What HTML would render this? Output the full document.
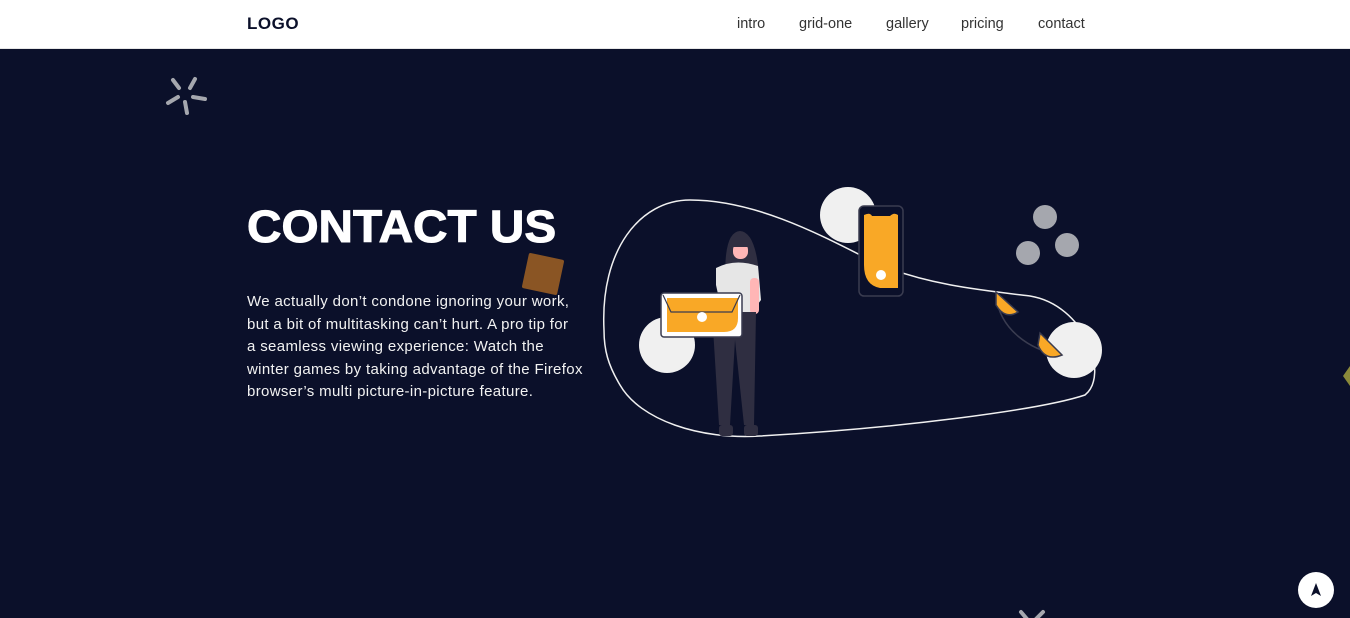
<!DOCTYPE html>
<html><head><meta charset="utf-8"><style>
*{margin:0;padding:0;box-sizing:border-box}
body{width:1350px;height:618px;overflow:hidden;background:#0b102a;font-family:"Liberation Sans",sans-serif;position:relative}
.hdr{position:absolute;left:0;top:0;width:1350px;height:49px;background:#fff;border-bottom:1px solid #e6e6e6}
.logo{position:absolute;left:247px;top:14px;font-weight:bold;font-size:17px;color:#0b102a;letter-spacing:0.5px}
.nav{position:absolute;top:16px;font-size:14.5px;color:#333}
h1{position:absolute;left:247px;top:201px;font-size:45px;font-weight:900;color:#fff;letter-spacing:0px;white-space:nowrap;transform:scaleX(1.06);transform-origin:left;-webkit-text-stroke:1px #fff}
p{position:absolute;left:247px;top:291px;font-size:15px;line-height:22.5px;color:#f2f2f2;white-space:nowrap;letter-spacing:0.35px}
.up{position:absolute;left:1298px;top:572px;width:36px;height:36px;border-radius:50%;background:#fff}
</style></head><body>
<div class="hdr">
<div class="logo">LOGO</div>
<div class="nav" style="left:737px">intro</div>
<div class="nav" style="left:799px">grid-one</div>
<div class="nav" style="left:886px">gallery</div>
<div class="nav" style="left:961px">pricing</div>
<div class="nav" style="left:1038px">contact</div>
</div>
<svg style="position:absolute;left:0;top:0" width="1350" height="618">
<g stroke="#a5a7ae" stroke-width="4" stroke-linecap="round" fill="none">
<line x1="173" y1="80" x2="179" y2="88"/><line x1="195" y1="79" x2="190" y2="88"/>
<line x1="193" y1="97" x2="205" y2="99"/><line x1="168" y1="103" x2="178" y2="97"/>
<line x1="185" y1="102" x2="187" y2="113"/>
<line x1="1021" y1="612" x2="1027" y2="619"/><line x1="1043" y1="612" x2="1036" y2="619"/>
</g>
<rect x="525" y="256" width="36" height="36" rx="2" fill="#8a5524" transform="rotate(12 543 274)"/>
<polygon points="1350,366 1343,376 1350,386" fill="#8b8a3a"/>
<path d="M604,330 C600,250 640,200 690,200 C760,200 830,240 880,265 C930,285 980,290 1030,296 C1085,305 1110,375 1085,395 C1040,410 900,428 760,436 C700,440 640,420 620,385 C608,365 604,350 604,330Z" fill="none" stroke="#f0f0f0" stroke-width="1.5"/>
<circle cx="848" cy="215" r="28" fill="#f0f0f0"/>
<circle cx="667" cy="345" r="28" fill="#f0f0f0"/>
<circle cx="1074" cy="350" r="28" fill="#f0f0f0"/>
<circle cx="1045" cy="217" r="12" fill="#a5a7ae"/>
<circle cx="1067" cy="245" r="12" fill="#a5a7ae"/>
<circle cx="1028" cy="253" r="12" fill="#a5a7ae"/>
<rect x="859" y="206" width="44" height="90" rx="5" fill="#0b102a" stroke="#3a3c50" stroke-width="1.5"/>
<path d="M864,215 Q870,212 872,216 L890,216 Q894,212 898,215 L898,288 L880,288 Q864,285 864,265Z" fill="#f9a826"/>
<circle cx="881" cy="275" r="5" fill="#fff"/>
<path d="M996,296 C1000,330 1030,350 1060,355" fill="none" stroke="#3a3c50" stroke-width="1.5"/>
<path d="M996,292 L1018,312 Q1005,320 996,305Z" fill="#f9a826" stroke="#3a3c50" stroke-width="1.5"/>
<path d="M1040,333 L1062,355 Q1045,362 1038,345Z" fill="#f9a826" stroke="#3a3c50" stroke-width="1.5"/>
<path d="M726,290 Q722,232 740,231 Q758,232 760,290Z" fill="#2f2e41"/>
<rect x="733" y="243" width="15" height="16" rx="7" fill="#ffb6b6"/>
<rect x="731" y="240" width="20" height="7" fill="#2f2e41"/>
<path d="M716,268 Q735,258 758,266 L761,300 L752,312 L722,312 L716,285Z" fill="#e6e6e6"/>
<rect x="750" y="278" width="9" height="36" rx="4" fill="#ffb6b6"/>
<path d="M712,312 L756,312 L754,425 L744,425 L735,340 L730,425 L719,425Z" fill="#2f2e41"/>
<rect x="719" y="425" width="14" height="11" rx="3" fill="#2f2e41"/>
<rect x="744" y="425" width="14" height="11" rx="3" fill="#2f2e41"/>
<rect x="661" y="293" width="81" height="44" rx="3" fill="#fff" stroke="#3a3c50" stroke-width="1.5"/>
<path d="M667,298 L738,298 L738,318 Q738,332 724,332 L667,332Z" fill="#f9a826"/>
<polyline points="663,295 671,312 732,312 740,295" fill="none" stroke="#3a3c50" stroke-width="1.2"/>
<circle cx="702" cy="317" r="5" fill="#fff"/>
</svg>
<h1>CONTACT US</h1>
<p>We actually don’t condone ignoring your work,<br>but a bit of multitasking can’t hurt. A pro tip for<br>a seamless viewing experience: Watch the<br>winter games by taking advantage of the Firefox<br>browser’s multi picture-in-picture feature.</p>
<div class="up"><svg width="36" height="36"><path d="M18,11 L23,24 L18,21 L13,24Z" fill="#0b102a"/></svg></div>
</body></html>
